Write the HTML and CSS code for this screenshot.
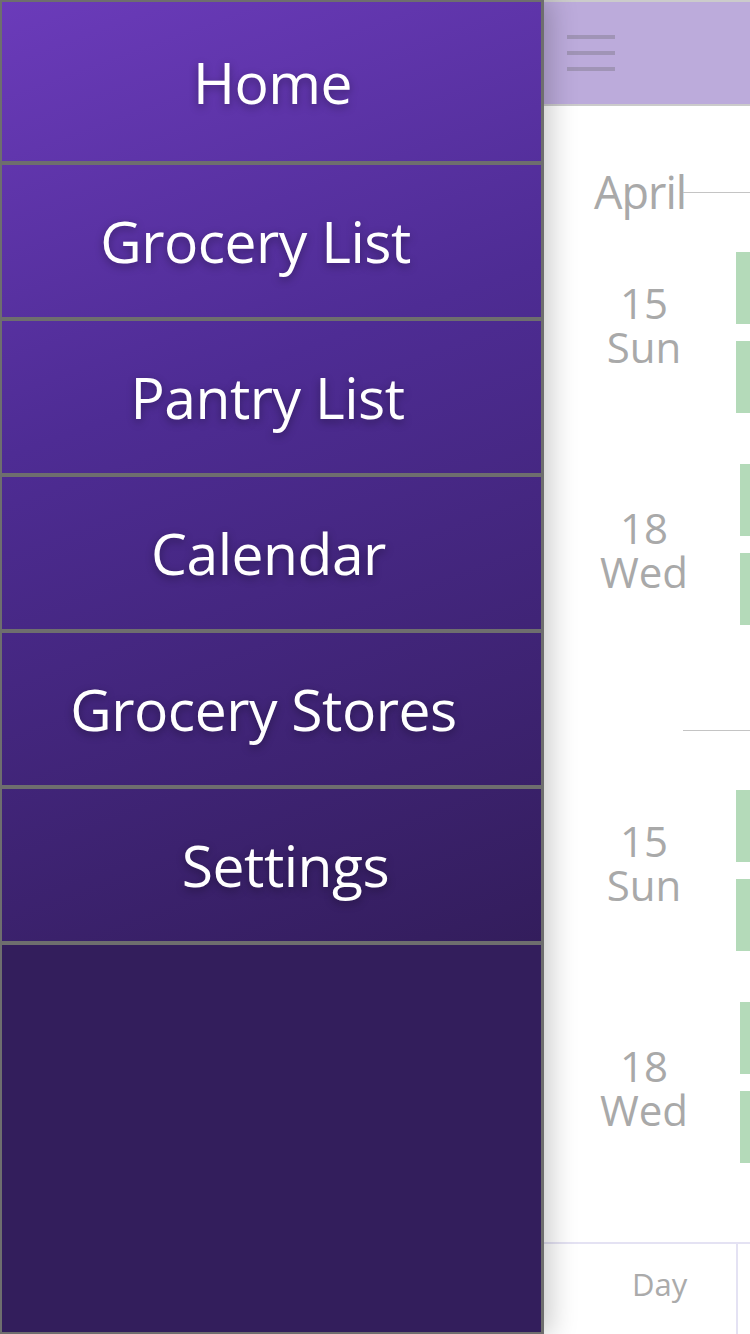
FILE: index.html
```html
<!DOCTYPE html>
<html lang="en">
<head>
<meta charset="utf-8">
<title>Grocery App</title>
<link rel="stylesheet" href="styles.css">
</head>
<body>
<div class="app">
  <nav class="drawer">
    <ul class="menu">
      <li class="menu-item item-home">Home</li>
      <li class="menu-item item-grocery">Grocery List</li>
      <li class="menu-item item-pantry">Pantry List</li>
      <li class="menu-item item-calendar">Calendar</li>
      <li class="menu-item item-stores">Grocery Stores</li>
      <li class="menu-item item-settings">Settings</li>
    </ul>
    <div class="drawer-fill"></div>
  </nav>

  <main class="main">
    <header class="topbar">
      <div class="burger"><span></span><span></span><span></span></div>
    </header>

    <section class="agenda">
      <div class="month">
        <div class="month-head"><span class="month-label">April</span><span class="month-line"></span></div>
        <div class="days">
          <div class="day">
            <div class="date"><span class="num">15</span><span class="dow">Sun</span></div>
            <div class="events"><div class="event"></div><div class="event"></div></div>
          </div>
          <div class="day day-shift">
            <div class="date"><span class="num">18</span><span class="dow">Wed</span></div>
            <div class="events"><div class="event"></div><div class="event"></div></div>
          </div>
        </div>
      </div>
      <div class="month">
        <div class="month-head"><span class="month-label"></span><span class="month-line"></span></div>
        <div class="days">
          <div class="day">
            <div class="date"><span class="num">15</span><span class="dow">Sun</span></div>
            <div class="events"><div class="event"></div><div class="event"></div></div>
          </div>
          <div class="day day-shift">
            <div class="date"><span class="num">18</span><span class="dow">Wed</span></div>
            <div class="events"><div class="event"></div><div class="event"></div></div>
          </div>
        </div>
      </div>
    </section>

    <footer class="tabs">
      <div class="tab">Day</div>
      <div class="tab"></div>
    </footer>
  </main>
</div>
</body>
</html>
```

FILE: styles.css
```css
* { box-sizing: border-box; }

html, body {
  margin: 0;
  padding: 0;
  width: 750px;
  height: 1334px;
  overflow: hidden;
  background: #ffffff;
}

body {
  font-family: "Open Sans", "Noto Sans", "DejaVu Sans", sans-serif;
}

.app {
  display: flex;
  width: 750px;
  height: 1334px;
  overflow: hidden;
}

/* Drawer */
.drawer {
  position: relative;
  z-index: 2;
  flex: 0 0 544px;
  width: 544px;
  height: 1334px;
  display: flex;
  flex-direction: column;
  border: 2px solid #6e6e6e;
  border-right-width: 3px;
  background: #331e5c;
  box-shadow: 4px 0 26px 2px rgba(0, 0, 0, 0.22);
}

.menu {
  list-style: none;
  margin: 0;
  padding: 0;
  background: linear-gradient(160deg, #6b3bba 0%, #4e2c94 40%, #331d5c 100%);
}

.menu-item {
  height: 156px;
  border-bottom: 4px solid #6e6e6e;
  margin-right: -2px;
  display: flex;
  align-items: center;
  justify-content: center;
  color: #ffffff;
  font-size: 57px;
  letter-spacing: -0.5px;
  text-shadow: 0 3px 8px rgba(0, 0, 0, 0.35);
  white-space: nowrap;
}

.item-home { height: 163px; }
.item-grocery { padding-right: 34px; }
.item-pantry { padding-right: 10px; }
.item-calendar { padding-right: 8px; }
.item-stores { padding-right: 18px; }
.item-settings { padding-left: 26px; }

.drawer-fill {
  flex: 1;
  background: #331e5c;
}

/* Main content (pushed right by the drawer) */
.main {
  flex: 0 0 750px;
  width: 750px;
  height: 1334px;
  display: flex;
  flex-direction: column;
  background: #ffffff;
}

.topbar {
  height: 106px;
  flex: 0 0 106px;
  background: #bcabdb;
  border-top: 2px solid #cbcbcb;
  border-bottom: 2px solid #cbcbcb;
  padding: 33px 0 0 23px;
}

.burger {
  display: flex;
  flex-direction: column;
  gap: 12px;
  width: 48px;
}

.burger span {
  display: block;
  height: 4px;
  background: #a094b6;
}

.agenda {
  flex: 1;
  padding-top: 55px;
  display: flex;
  flex-direction: column;
  gap: 74px;
  color: #a9a9a9;
}

.month-head {
  height: 62px;
  display: flex;
  align-items: center;
  padding-left: 50px;
}

.month-label {
  width: 89px;
  font-size: 45px;
  line-height: 62px;
  letter-spacing: -1px;
  white-space: nowrap;
}

.month-line {
  flex: 1;
  height: 1px;
  background: #c4c4c4;
}

.days {
  padding-top: 29px;
  display: flex;
  flex-direction: column;
  gap: 51px;
}

.day {
  display: flex;
  align-items: center;
}

.date {
  width: 120px;
  margin-left: 40px;
  display: flex;
  flex-direction: column;
  align-items: center;
  font-size: 42px;
  line-height: 44px;
  padding-bottom: 16px;
}

.events {
  margin-left: 32px;
  display: flex;
  flex-direction: column;
  gap: 17px;
}

.day-shift .events { margin-left: 36px; }
.day-shift .date { padding-bottom: 0; padding-top: 10px; }

.event {
  width: 520px;
  height: 72px;
  background: #b4dab9;
}

/* Bottom tabs */
.tabs {
  height: 92px;
  flex: 0 0 92px;
  display: flex;
  border-top: 2px solid #e4e2f3;
}

.tab {
  width: 194px;
  border-right: 2px solid #e4e2f3;
  padding-left: 88px;
  padding-bottom: 10px;
  display: flex;
  align-items: center;
  color: #ababab;
  font-size: 31px;
}
```
